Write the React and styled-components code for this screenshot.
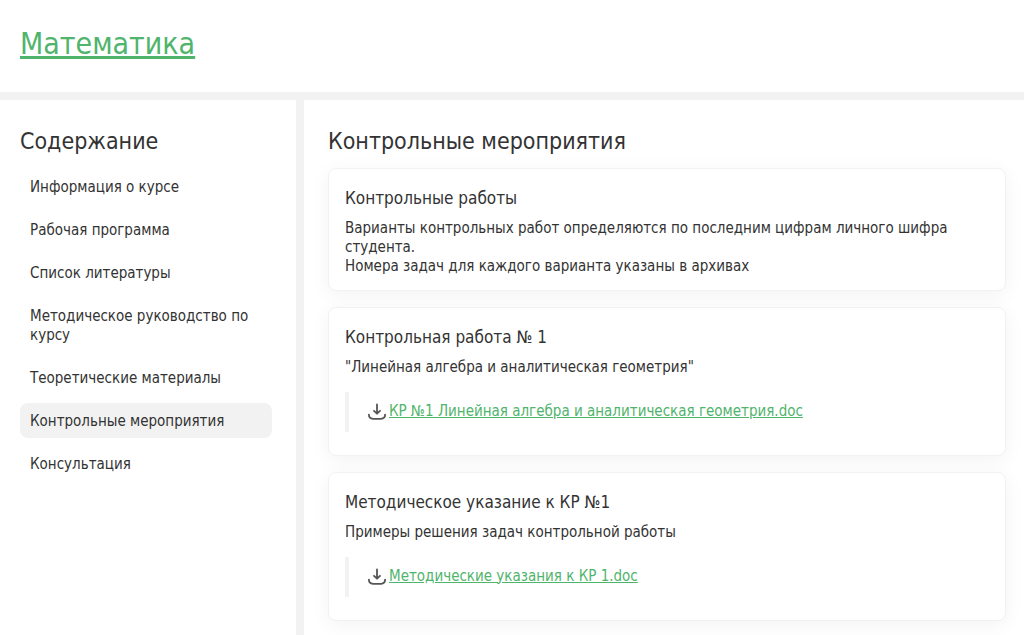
import React from 'react'
import styled, { createGlobalStyle } from 'styled-components';


const GlobalStyle = createGlobalStyle`
  * {
    box-sizing: border-box;
  }
  body {
    margin: 0;
    background-color: white;
    color: #333333;
    font-family: Tahoma, "DejaVu Sans Condensed", "DejaVu Sans", sans-serif;
    font-size: 15px;
    line-height: 19px;
  }
`
const Page = styled.div`
  min-height: 100vh;
  display: flex;
  flex-direction: column;
`
const Header = styled.header`
  padding: 24px 20px 28px;
  border-bottom: 8px solid #f2f2f2;
`
const CourseTitle = styled.h1`
  margin: 0;
  font-size: 30px;
  font-weight: 400;
  line-height: 40px;
`
const Link = styled.a`
  color: #4fb46c;
  text-decoration: underline;
`
const Body = styled.div`
  flex: 1;
  display: flex;
`
const Sidebar = styled.aside`
  flex: 0 0 304px;
  padding: 26px 24px 20px 20px;
  border-right: 8px solid #f2f2f2;
`
const Heading = styled.h2`
  margin: 0 0 12px;
  font-size: 23px;
  font-weight: 400;
  line-height: 30px;
`
const Menu = styled.nav`
  display: flex;
  flex-direction: column;
  gap: 8px;
  padding-top: 1px;
`
const MenuItem = styled.a`
  padding: 9px 10px 7px;
  border-radius: 8px;
  background-color: ${props => props.$active ? '#f2f2f2' : 'transparent'};
  color: inherit;
  text-decoration: none;
`
const Main = styled.main`
  flex: 1;
  min-width: 0;
  padding: 26px 18px 13px 24px;
`
const Cards = styled.div`
  display: flex;
  flex-direction: column;
  gap: 16px;
`
const Card = styled.section`
  padding: 18px 16px 14px;
  border: 1px solid #f2f2f2;
  border-radius: 8px;
  background-color: white;
  box-shadow: 0 4px 20px rgba(0, 0, 0, 0.05);
`
const CardTitle = styled.h3`
  margin: 0 0 10px;
  font-size: 17px;
  font-weight: 400;
  line-height: 22px;
`
const CardText = styled.p`
  margin: 0;
`
const FileBox = styled.div`
  display: flex;
  align-items: center;
  height: 40px;
  margin: 15px 0 9px;
  padding: 0 0 2px 18px;
  border-left: 4px solid #f2f2f2;
`
const DownloadIcon = styled.svg`
  flex: none;
  width: 20px;
  height: 20px;
  margin-right: 2px;
`

const menu = [
  'Информация о курсе',
  'Рабочая программа',
  'Список литературы',
  'Методическое руководство по курсу',
  'Теоретические материалы',
  'Контрольные мероприятия',
  'Консультация',
]

const cards = [
  {
    title: 'Контрольные работы',
    lines: [
      'Варианты контрольных работ определяются по последним цифрам личного шифра студента.',
      'Номера задач для каждого варианта указаны в архивах',
    ],
  },
  {
    title: 'Контрольная работа № 1',
    lines: ['"Линейная алгебра и аналитическая геометрия"'],
    file: 'КР №1 Линейная алгебра и аналитическая геометрия.doc',
  },
  {
    title: 'Методическое указание к КР №1',
    lines: ['Примеры решения задач контрольной работы'],
    file: 'Методические указания к КР 1.doc',
  },
]

const File = ({ name }) => (
  <FileBox>
    <DownloadIcon viewBox="0 0 20 20" fill="none" stroke="#555555" strokeWidth="1.8" strokeLinecap="round" strokeLinejoin="round" aria-hidden="true">
      <path d="M10 3.5V12.4M7 9.8L10 12.7L13 9.8" />
      <path d="M1.9 13.6C1.9 16.4 3.4 17.8 6 17.8H14C16.6 17.8 18.1 16.4 18.1 13.6" />
    </DownloadIcon>
    <Link href="#">{name}</Link>
  </FileBox>
)

const App = () => {
  return (
    <>
      <GlobalStyle />
      <Page>
        <Header>
          <CourseTitle><Link href="#">Математика</Link></CourseTitle>
        </Header>
        <Body>
          <Sidebar>
            <Heading>Содержание</Heading>
            <Menu>
              {menu.map(item => (
                <MenuItem key={item} href="#" $active={item === 'Контрольные мероприятия'}>{item}</MenuItem>
              ))}
            </Menu>
          </Sidebar>
          <Main>
            <Heading>Контрольные мероприятия</Heading>
            <Cards>
              {cards.map(card => (
                <Card key={card.title}>
                  <CardTitle>{card.title}</CardTitle>
                  {card.lines.map(line => <CardText key={line}>{line}</CardText>)}
                  {card.file && <File name={card.file} />}
                </Card>
              ))}
            </Cards>
          </Main>
        </Body>
      </Page>
    </>
  )
}

export default App;
